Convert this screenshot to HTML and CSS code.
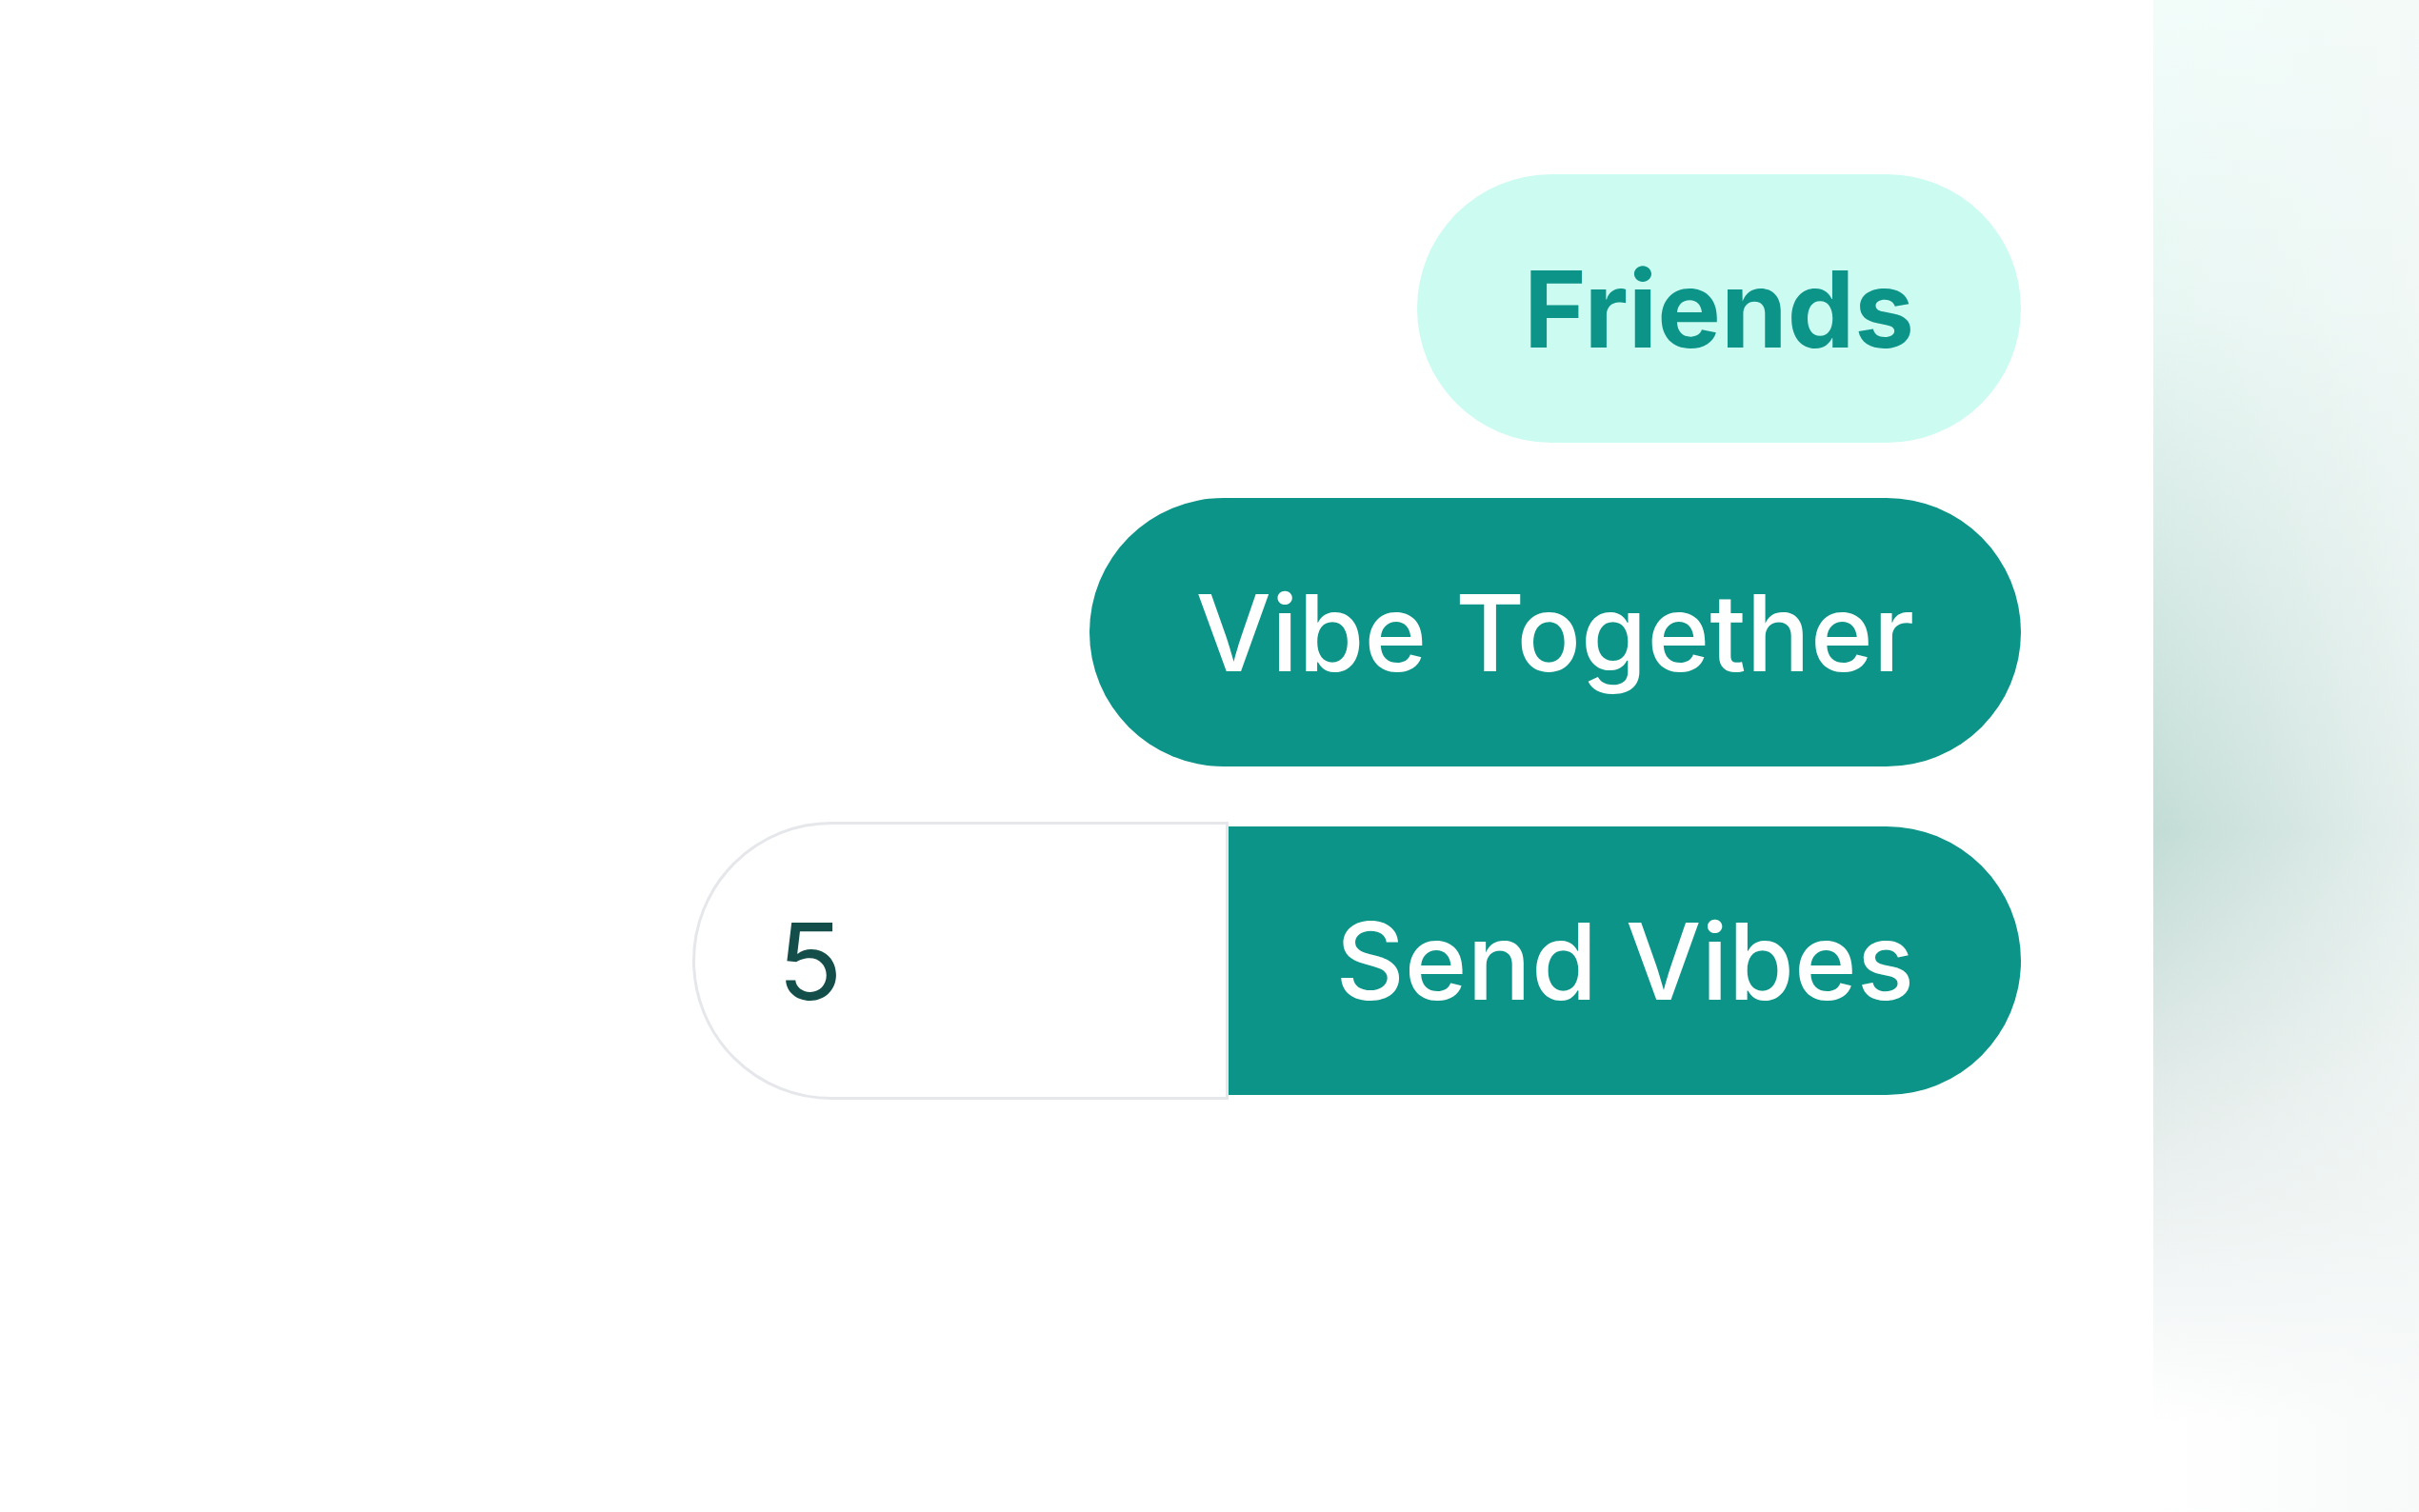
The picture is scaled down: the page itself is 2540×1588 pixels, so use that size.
FILE: index.html
```html
<!DOCTYPE html>
<html lang="en">
<head>
    <meta charset="UTF-8">
    <meta name="viewport" content="width=device-width, initial-scale=1.0">
    <title>Vibes</title>
    <link rel="stylesheet" href="styles.css">
</head>
<body>

    <div class="page">
        <div class="actions">
            <button class="pill soft">Friends</button>
            <button class="pill solid">Vibe Together</button>

            <div class="send_row">
                <input class="amount" type="text" value="5">
                <button class="pill solid send">Send Vibes</button>
            </div>
        </div>

        <div class="side"></div>
    </div>

</body>
</html>
```

FILE: styles.css
```css
body {
    margin: 0;
    padding: 0;
    background: #ffffff;
    font-family: Inter, "Noto Sans", sans-serif;
}

.page{
    display: flex;
    height: 100vh;
}

.actions{
    flex: 1;
    display: flex;
    flex-direction: column;
    align-items: flex-end;
    gap: 58px;
    padding-top: 183px;
    padding-right: 139px;
}

.pill{
    border: none;
    border-radius: 9999px;
    font-family: Inter, "Noto Sans", sans-serif;
    font-size: 112px;
    line-height: 168px;
    padding: 57px 112px;
    cursor: pointer;
}

.soft{
    background: #ccfbf1;
    color: #0d9488;
    font-weight: 700;
}

.solid{
    background: #0d9488;
    color: #ffffff;
    font-weight: 500;
}

.send_row{
    display: flex;
    align-items: center;
}

.amount{
    width: 563px;
    height: 292px;
    box-sizing: border-box;
    border: 3px solid #e5e7eb;
    border-radius: 9999px 0 0 9999px;
    padding: 0 0 0 86px;
    font-family: Inter, "Noto Sans", sans-serif;
    font-size: 112px;
    color: #134e4a;
    outline: none;
}

.send{
    border-radius: 0 9999px 9999px 0;
}

.side{
    width: 279px;
    background:
        linear-gradient(to right, rgba(255, 255, 255, 0) 0%, rgba(244, 248, 247, 0.7) 100%),
        linear-gradient(to bottom, #f2fdfa 0%, #e8f7f3 20%, #c3dcd6 55%, #e2ebe9 72%, #f4f7f7 86%, #ffffff 94%);
}
```
